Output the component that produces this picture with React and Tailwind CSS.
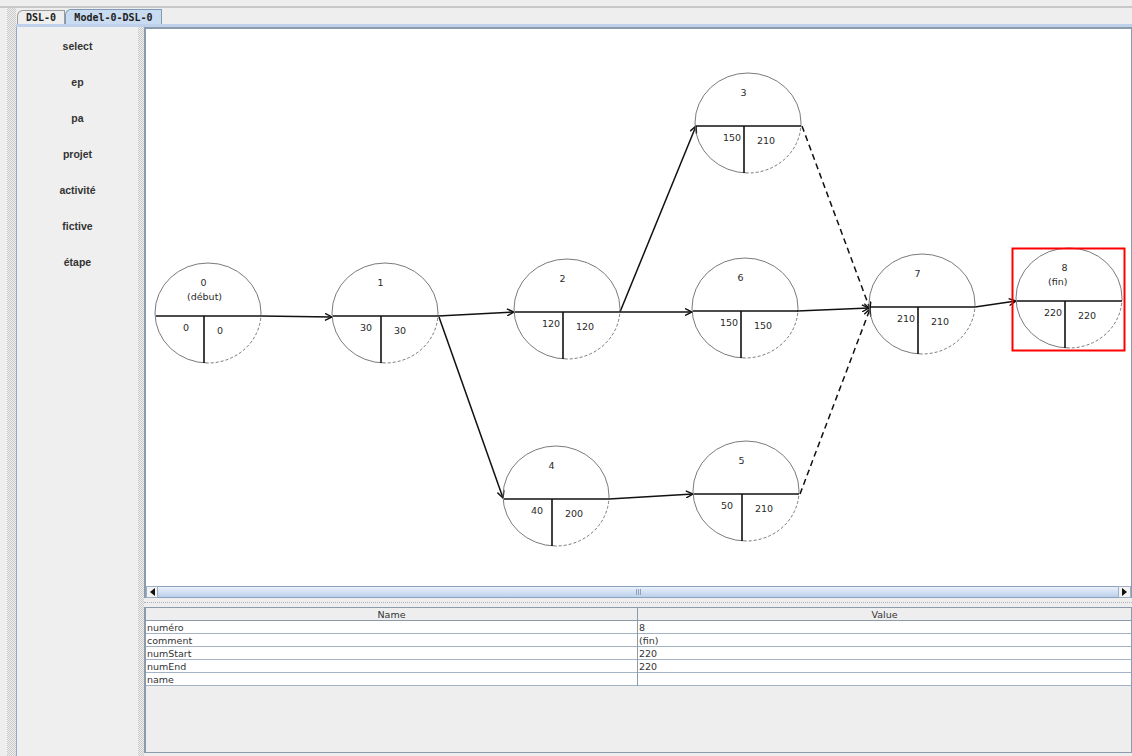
import React from "react";

const tools = ["select", "ep", "pa", "projet", "activité", "fictive", "étape"];

const nodes = [
	{ l: 155, y: 316, n: "0", note: "(début)", a: "0", b: "0" },
	{ l: 332, y: 316, n: "1", a: "30", b: "30" },
	{ l: 514, y: 312, n: "2", a: "120", b: "120" },
	{ l: 695, y: 126, n: "3", a: "150", b: "210" },
	{ l: 692, y: 311, n: "6", a: "150", b: "150" },
	{ l: 869, y: 307, n: "7", a: "210", b: "210" },
	{ l: 1016, y: 301, n: "8", note: "(fin)", a: "220", b: "220" },
	{ l: 503, y: 499, n: "4", a: "40", b: "200" },
	{ l: 693, y: 494, n: "5", a: "50", b: "210" },
];

const edges = [
	[261, 316, 332, 317],
	[438, 316, 514, 312],
	[439, 317, 503, 498],
	[620, 312, 696, 126],
	[620, 312, 692, 312],
	[797, 311, 869, 308],
	[975, 307, 1016, 301],
	[609, 499, 693, 494],
];

const dashed = [
	[802, 126, 870, 309],
	[800, 494, 870, 309],
];

const props = [
	["numéro", "8"],
	["comment", "(fin)"],
	["numStart", "220"],
	["numEnd", "220"],
	["name", ""],
];

function Node({ l, y, n, note, a, b }) {
	const cx = l + 53;
	const cy = y - 3;
	const rx = 53;
	const ry = 50;
	const txt = { fontFamily: "'DejaVu Sans', sans-serif", fontSize: 9.5, fill: "#2a2a2a" };
	return (
		<g>
			<path d={`M ${cx + rx} ${cy} A ${rx} ${ry} 0 1 0 ${cx} ${cy + ry}`} fill="none" stroke="#6b6b6b" strokeWidth="0.9" />
			<path d={`M ${cx + rx} ${cy} A ${rx} ${ry} 0 0 1 ${cx} ${cy + ry}`} fill="none" stroke="#6b6b6b" strokeWidth="0.9" strokeDasharray="3 2" />
			<path d={`M ${l + 1} ${y} H ${l + 106}`} stroke="#111" strokeWidth="1.6" />
			<path d={`M ${l + 49} ${y} V ${y + 47}`} stroke="#111" strokeWidth="1.6" />
			<text x={l + 45.5} y={y - 30} style={txt}>{n}</text>
			{note && <text x={l + 32} y={y - 16} style={txt}>{note}</text>}
			<text x={l + 28} y={y + 15} style={txt}>{a}</text>
			<text x={l + 62} y={y + 18} style={txt}>{b}</text>
		</g>
	);
}

function Graph() {
	return (
		<svg width="985" height="557" viewBox="146 29 985 557" className="block">
			<defs>
				<marker id="arr" viewBox="0 0 8 8" refX="7.5" refY="4" markerWidth="8" markerHeight="8" orient="auto" markerUnits="userSpaceOnUse">
					<path d="M0.5,0.5 L7.5,4 L0.5,7.5" fill="none" stroke="#111" strokeWidth="1.4" />
				</marker>
			</defs>
			{edges.map(([x1, y1, x2, y2], i) => (
				<line key={i} x1={x1} y1={y1} x2={x2} y2={y2} stroke="#111" strokeWidth="1.5" markerEnd="url(#arr)" />
			))}
			{dashed.map(([x1, y1, x2, y2], i) => (
				<line key={"d" + i} x1={x1} y1={y1} x2={x2} y2={y2} stroke="#111" strokeWidth="1.5" strokeDasharray="6 4" markerEnd="url(#arr)" />
			))}
			{nodes.map((nd) => (
				<Node key={nd.n} {...nd} />
			))}
			<rect x="1012.5" y="248.5" width="112" height="102" fill="none" stroke="#ff0000" strokeWidth="2" />
		</svg>
	);
}

function Arrow({ left }) {
	return (
		<svg width="5" height="8" viewBox="0 0 5 8">
			<path d={left ? "M5,0 L0,4 L5,8 Z" : "M0,0 L5,4 L0,8 Z"} fill="#111" />
		</svg>
	);
}

export default function App() {
	// motif pointillé des séparateurs
	const dots = "bg-[conic-gradient(#cacaca_25%,transparent_0_50%,#cacaca_0_75%,transparent_0)] bg-[length:2px_2px]";

	return (
		<div className="w-[1132px] h-[756px] bg-[#eeeeee] flex flex-col overflow-hidden font-['Liberation_Sans',sans-serif]">
			<div className="h-[8px] shrink-0 border-b-2 border-[#c8c8c8]" />
			<div className="flex flex-1 min-h-0">
				<div className="w-[7px] shrink-0" />
				<div className={`w-[9px] shrink-0 ${dots}`} />
				<div className="flex-1 flex flex-col min-w-0">
					<div className="h-[16px] shrink-0 flex items-end pl-[1px]">
						<div className="h-[14px] w-[48px] flex items-center justify-center border border-b-0 border-[#9a9a9a] rounded-tl-[6px] bg-[#eeeeee] font-['DejaVu_Sans_Mono',monospace] font-bold text-[10px] text-[#222]">
							DSL-0
						</div>
						<div className="h-[15px] w-[97px] flex items-center justify-center border border-b-0 border-[#7f9ab8] rounded-tl-[6px] bg-[#c9dbf0] font-['DejaVu_Sans_Mono',monospace] font-bold text-[10px] text-[#222]">
							Model-0-DSL-0
						</div>
					</div>
					<div className="h-[3px] shrink-0 bg-[#bfd1ea]" />
					<div className="flex flex-1 min-h-0">
						<div className="w-[1px] shrink-0 bg-[#93a9c9]" />
						<div className="w-[121px] shrink-0 bg-[#efefef] flex flex-col pt-[2px]">
							{tools.map((t) => (
								<div key={t} className="h-[36px] flex items-center justify-center font-bold text-[10.5px] text-[#333]">
									{t}
								</div>
							))}
						</div>
						<div className={`w-[6px] shrink-0 ${dots}`} />
						<div className="flex-1 flex flex-col min-w-0">
							<div className="h-[559px] shrink-0 bg-white border-l-2 border-t-2 border-r border-[#8c9bab] overflow-hidden">
								<Graph />
							</div>
							<div className="h-[12px] shrink-0 flex border-l-2 border-r border-[#8c9bab]">
								<div className="w-[12px] flex items-center justify-center bg-[#f2f2f2] border border-[#9fb0c4]">
									<Arrow left />
								</div>
								<div className="flex-1 flex items-center justify-center gap-[1px] bg-gradient-to-b from-[#eaf1fa] to-[#bcd0ea] border-y border-[#8aa2c0]">
									<div className="w-[1px] h-[6px] bg-[#8aa2c0]" />
									<div className="w-[1px] h-[6px] bg-[#8aa2c0]" />
									<div className="w-[1px] h-[6px] bg-[#8aa2c0]" />
								</div>
								<div className="w-[13px] flex items-center justify-center bg-[#f2f2f2] border border-[#9fb0c4]">
									<Arrow />
								</div>
							</div>
							<div className="h-[9px] shrink-0 flex items-center">
								<div className="w-full border-t border-dotted border-[#b0b0b0]" />
							</div>
							<div className="h-[146px] shrink-0 flex flex-col border-l-2 border-r border-b border-t border-[#8c9bab] font-['DejaVu_Sans',sans-serif] text-[9.5px] text-[#333]">
								<div className="h-[13px] shrink-0 grid grid-cols-[492px_1fr] bg-[#eeeeee] border-b border-[#8c9bab]">
									<div className="flex items-center justify-center border-r border-[#8c9bab]">Name</div>
									<div className="flex items-center justify-center">Value</div>
								</div>
								{props.map(([k, v]) => (
									<div key={k} className="h-[13px] shrink-0 grid grid-cols-[492px_1fr] bg-white border-b border-[#a3b3c5]">
										<div className="flex items-center pl-[1px] border-r border-[#8c9bab]">{k}</div>
										<div className="flex items-center pl-[1px]">{v}</div>
									</div>
								))}
								<div className="flex-1 bg-[#eeeeee]" />
							</div>
							<div className="flex-1" />
						</div>
					</div>
				</div>
			</div>
		</div>
	);
}
